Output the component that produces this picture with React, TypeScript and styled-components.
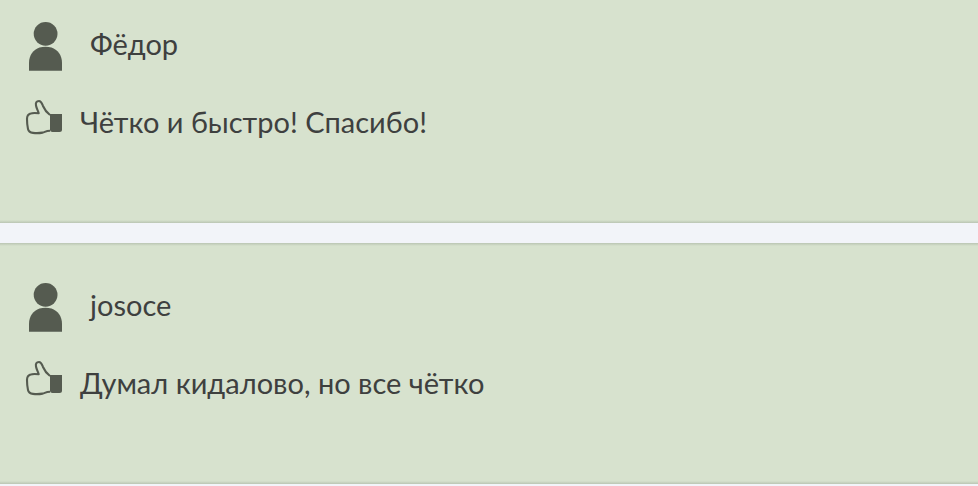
import React from 'react';
import styled, { createGlobalStyle } from 'styled-components';

const GlobalStyle = createGlobalStyle`
  * { box-sizing: border-box; }
  body {
    margin: 0;
    background: #f2f4f9;
    color: #3e403f;
    font-family: Lato, "Noto Sans", sans-serif;
  }
`;

const ReviewList = styled.main`
  display: flex;
  flex-direction: column;
  gap: 20px;
`;

const ReviewCard = styled.article<{ $first?: boolean }>`
  display: flex;
  flex-direction: column;
  gap: 26px;
  padding: ${({ $first }) => ($first ? '20px' : '38px')} 24px 83px;
  background:
    linear-gradient(to top, #bac5b3, #d7e2ce) bottom / 100% 3px no-repeat,
    linear-gradient(to bottom, #bac5b3, #d7e2ce) top / 100% ${({ $first }) => ($first ? '0' : '3px')} no-repeat,
    #d7e2ce;
`;

const Author = styled.header`
  display: flex;
  align-items: flex-start;
  gap: 24px;
`;

const AuthorName = styled.h2`
  margin: 0;
  padding-top: 6px;
  font-size: 29px;
  font-weight: 400;
  line-height: 36px;
`;

const Comment = styled.div`
  display: flex;
  align-items: flex-start;
  gap: 14px;
`;

const CommentText = styled.p`
  margin: 0;
  padding-top: 6px;
  font-size: 29px;
  line-height: 36px;
`;

const Icon = styled.svg`
  display: block;
  flex: none;
`;

const UserIcon = () => (
  <Icon width="42" height="52" viewBox="0 0 42 52" fill="#555b50" aria-hidden="true">
    <circle cx="21.6" cy="13.8" r="11.9" />
    <path d="M5 50.7V43C5 35 9.500 29.500 15.500 27.500Q21.500 26.200 27.500 27.500C33.500 29.500 38 35 38 43V50.700Z" />
  </Icon>
);

const ThumbIcon = () => (
  <Icon width="42" height="38" viewBox="0 0 42 38" aria-hidden="true">
    <path
      d="M26 17C22.5 14.5 20.5 11.5 19 8C18 5.5 17.3 3 15 3C12.3 3 11.5 5 12 7.5C12.5 10.5 14 12.5 14.7 15.3C11.5 15 8.5 14.8 6.5 15.6C4 16.5 3 18 3 21C3 25 3.3 28 4 31C4.6 34 6.5 34.6 9 34.9C12 35.2 16 35.1 18.5 34.6C21 34.2 21.5 32.8 26 32.8"
      fill="none"
      stroke="#555b50"
      strokeWidth="2.1"
      strokeLinejoin="round"
    />
    <path d="M26 16H38V31.5Q38 34 35.5 34H28.5Q26 34 26 32Z" fill="#555b50" />
  </Icon>
);

const reviews = [
  { author: 'Фёдор', text: 'Чётко и быстро! Спасибо!' },
  { author: 'josoce', text: 'Думал кидалово, но все чётко' },
];

export default function App() {
  return (
    <>
      <GlobalStyle />
      <ReviewList>
        {reviews.map((review, index) => (
          <ReviewCard key={review.author} $first={index === 0}>
            <Author><UserIcon /><AuthorName>{review.author}</AuthorName></Author>
            <Comment><ThumbIcon /><CommentText>{review.text}</CommentText></Comment>
          </ReviewCard>
        ))}
      </ReviewList>
    </>
  );
}
